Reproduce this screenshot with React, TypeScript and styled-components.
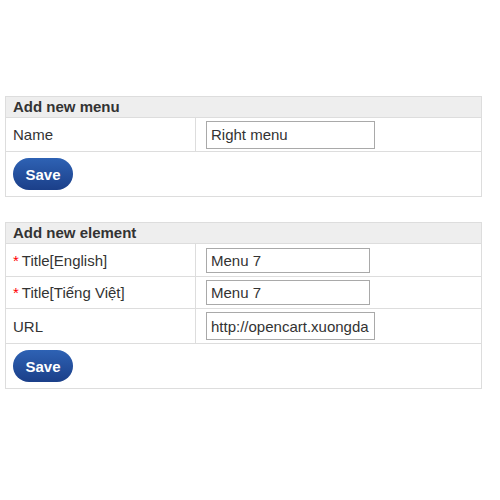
import React from "react";
import styled, { createGlobalStyle } from "styled-components";

const Global = createGlobalStyle`
  html, body { margin: 0; padding: 0; background: #ffffff; }
  body { font-family: "Liberation Sans", Arial, sans-serif; color: #333; }
`;

const Page = styled.div`
  width: 500px;
  height: 500px;
  padding: 96px 0 0 5px;
  box-sizing: border-box;
  display: flex;
  flex-direction: column;
  gap: 25px;
`;

const Table = styled.table`
  width: 477px;
  border-collapse: collapse;
  border: 1px solid #dddddd;
  font-size: 15px;
`;

const HeadCell = styled.td`
  background: #eeeeee;
  font-weight: bold;
  color: #333;
  height: 20px;
  padding: 0 0 0 7px;
  border-bottom: 1px solid #dddddd;
  line-height: 20px;
`;

const LabelCell = styled.td`
  width: 182px;
  padding: 0 0 0 7px;
  border-right: 1px solid #dddddd;
  border-bottom: 1px solid #dddddd;
  height: ${(p: { $h: number }) => p.$h}px;
  color: #333;
`;

const FieldCell = styled.td`
  padding: 0 0 0 10px;
  border-bottom: 1px solid #dddddd;
`;

const Required = styled.span`
  color: #ff0000;
  margin-right: 3px;
`;

const Input = styled.input<{ $w: number; $h: number }>`
  display: block;
  box-sizing: border-box;
  width: ${(p) => p.$w}px;
  height: ${(p) => p.$h}px;
  border: 1px solid #a9a9a9;
  padding: 0 4px;
  font-family: "Liberation Sans", Arial, sans-serif;
  font-size: 15px;
  color: #333;
  background: #fff;
  outline: none;
`;

const ButtonCell = styled.td`
  padding: 6px 0 0 7px;
  height: ${(p: { $h: number }) => p.$h}px;
  vertical-align: top;
  box-sizing: border-box;
`;

const SaveButton = styled.button`
  width: 60px;
  height: 32px;
  border: none;
  border-radius: 16px;
  background: linear-gradient(#2e62b4, #1b3f89);
  color: #fff;
  font-family: "Liberation Sans", Arial, sans-serif;
  font-weight: bold;
  font-size: 15px;
  padding: 0;
  cursor: pointer;
`;

export default function App() {
  return (
    <>
      <Global />
      <Page>
        <Table>
          <tbody>
            <tr>
              <HeadCell colSpan={2}>Add new menu</HeadCell>
            </tr>
            <tr>
              <LabelCell $h={33}>Name</LabelCell>
              <FieldCell>
                <Input $w={169} $h={28} defaultValue="Right menu" />
              </FieldCell>
            </tr>
            <tr>
              <ButtonCell colSpan={2} $h={45}>
                <SaveButton>Save</SaveButton>
              </ButtonCell>
            </tr>
          </tbody>
        </Table>
        <Table>
          <tbody>
            <tr>
              <HeadCell colSpan={2}>Add new element</HeadCell>
            </tr>
            <tr>
              <LabelCell $h={32}>
                <Required>*</Required>Title[English]
              </LabelCell>
              <FieldCell>
                <Input $w={164} $h={25} defaultValue="Menu 7" />
              </FieldCell>
            </tr>
            <tr>
              <LabelCell $h={31}>
                <Required>*</Required>Title[Tiếng Việt]
              </LabelCell>
              <FieldCell>
                <Input $w={164} $h={25} defaultValue="Menu 7" />
              </FieldCell>
            </tr>
            <tr>
              <LabelCell $h={34}>URL</LabelCell>
              <FieldCell>
                <Input $w={169} $h={28} defaultValue="http://opencart.xuongda" />
              </FieldCell>
            </tr>
            <tr>
              <ButtonCell colSpan={2} $h={45}>
                <SaveButton>Save</SaveButton>
              </ButtonCell>
            </tr>
          </tbody>
        </Table>
      </Page>
    </>
  );
}
